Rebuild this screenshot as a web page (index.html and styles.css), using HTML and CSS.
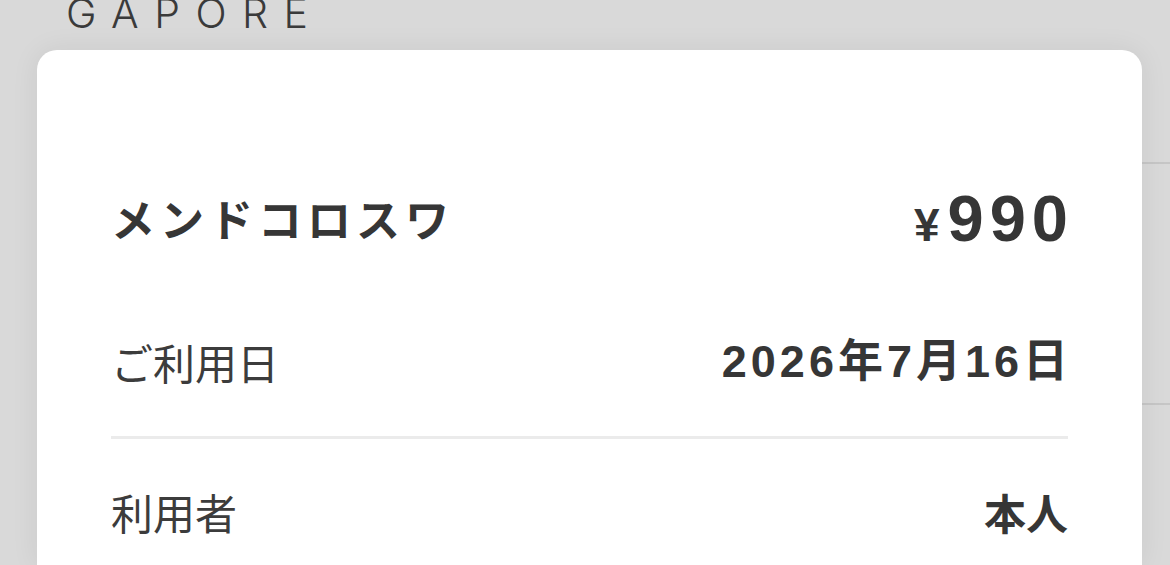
FILE: index.html
```html
<!DOCTYPE html>
<html lang="ja">
<head>
<meta charset="utf-8">
<title>ご利用明細</title>
<link rel="stylesheet" href="styles.css">
</head>
<body>
<div class="backdrop">
  <div class="brand">GAPORE</div>
  <div class="list">
    <div class="list-row first"></div>
    <div class="list-row"></div>
  </div>
</div>

<section class="sheet">
  <div class="title-row">
    <h1 class="merchant">メンドコロスワ</h1>
    <div class="amount"><span class="yen">¥</span><span class="num">990</span></div>
  </div>
  <div class="info-row divided">
    <span class="label">ご利用日</span>
    <span class="value date">2026年7月16日</span>
  </div>
  <div class="info-row">
    <span class="label">利用者</span>
    <span class="value">本人</span>
  </div>
</section>
</body>
</html>
```

FILE: styles.css
```css
html, body {
  margin: 0;
  padding: 0;
}

body {
  width: 1170px;
  height: 565px;
  overflow: hidden;
  background: #d9d9d9;
  position: relative;
  font-family: "Noto Sans CJK JP", sans-serif;
  color: #333333;
}

.backdrop {
  display: flex;
  flex-direction: column;
}

.brand {
  margin-top: -7px;
  padding-left: 66px;
  font-family: "Inter", "Liberation Sans", sans-serif;
  font-weight: 300;
  font-size: 41px;
  line-height: 40px;
  letter-spacing: 15.5px;
  color: #3a3a3a;
}

.list {
  display: flex;
  flex-direction: column;
  margin-left: 80px;
}

.list-row {
  height: 239px;
  border-bottom: 2px solid #c6c6c6;
}

.list-row.first {
  height: 129px;
}

.sheet {
  position: absolute;
  left: 37px;
  top: 50px;
  width: 1105px;
  height: 515px;
  box-sizing: border-box;
  padding: 120px 74px 0 74px;
  background: #ffffff;
  border-radius: 20px 20px 0 0;
  box-shadow: 0 0 28px rgba(0, 0, 0, 0.07);
  display: flex;
  flex-direction: column;
  overflow: hidden;
}

.title-row {
  height: 96px;
  display: flex;
  align-items: center;
  justify-content: space-between;
}

.merchant {
  margin: 0;
  font-size: 44px;
  font-weight: 700;
  letter-spacing: 5px;
  color: #363636;
  line-height: 60px;
}

.amount {
  display: flex;
  align-items: baseline;
  font-family: "Liberation Sans", "Noto Sans CJK JP", sans-serif;
  font-weight: 700;
  color: #363636;
}

.yen {
  font-size: 46px;
  margin-right: 8px;
}

.num {
  font-size: 65px;
  letter-spacing: 6px;
  margin-right: -6px;
}

.info-row {
  display: flex;
  align-items: center;
  justify-content: space-between;
  height: 60px;
  padding-top: 43px;
}

.info-row.divided {
  padding-top: 66px;
  padding-bottom: 44px;
  border-bottom: 3px solid #ebebeb;
}

.label {
  font-size: 42px;
  font-weight: 400;
  color: #3c3c3c;
  line-height: 60px;
}

.value {
  font-size: 42px;
  font-weight: 700;
  color: #363636;
  line-height: 60px;
}

.date {
  font-family: "Liberation Sans", "Noto Sans CJK JP", sans-serif;
  font-size: 45px;
  letter-spacing: 4px;
  margin-right: -4px;
}
```
